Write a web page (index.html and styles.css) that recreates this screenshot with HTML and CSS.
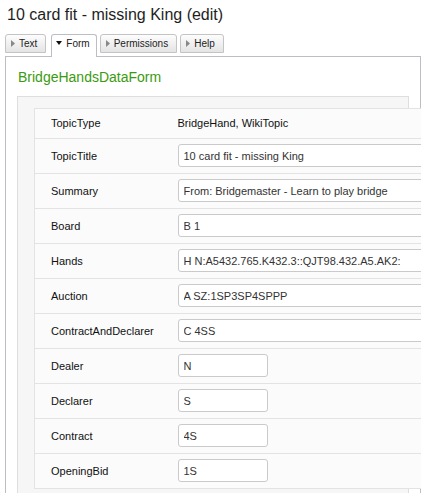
FILE: index.html
```html
<!DOCTYPE html>
<html>
<head>
<meta charset="utf-8">
<link rel="stylesheet" href="styles.css">
</head>
<body>
<h1 class="title">10 card fit - missing King (edit)</h1>
<ul class="tabs">
  <li class="tab"><svg class="arrow" width="4" height="7" viewBox="0 0 4 7"><path d="M0 0L4 3.5L0 7Z"/></svg>Text</li>
  <li class="tab active"><svg class="arrow" width="6" height="4" viewBox="0 0 6 4"><path d="M0 0L6 0L3 4Z"/></svg>Form</li>
  <li class="tab"><svg class="arrow" width="4" height="7" viewBox="0 0 4 7"><path d="M0 0L4 3.5L0 7Z"/></svg>Permissions</li>
  <li class="tab"><svg class="arrow" width="4" height="7" viewBox="0 0 4 7"><path d="M0 0L4 3.5L0 7Z"/></svg>Help</li>
</ul>
<div class="panel">
  <h2 class="form-title">BridgeHandsDataForm</h2>
  <div class="form-box">
    <table class="form-table">
      <colgroup><col class="label-col"><col class="value-col"></colgroup>
      <tr><th>TopicType</th><td>BridgeHand, WikiTopic</td></tr>
      <tr><th>TopicTitle</th><td><input class="field wide" type="text" value="10 card fit - missing King"></td></tr>
      <tr><th>Summary</th><td><input class="field wide" type="text" value="From: Bridgemaster - Learn to play bridge"></td></tr>
      <tr><th>Board</th><td><input class="field wide" type="text" value="B 1"></td></tr>
      <tr><th>Hands</th><td><input class="field wide" type="text" value="H N:A5432.765.K432.3::QJT98.432.A5.AK2:"></td></tr>
      <tr><th>Auction</th><td><input class="field wide" type="text" value="A SZ:1SP3SP4SPPP"></td></tr>
      <tr><th>ContractAndDeclarer</th><td><input class="field wide" type="text" value="C 4SS"></td></tr>
      <tr><th>Dealer</th><td><input class="field short" type="text" value="N"></td></tr>
      <tr><th>Declarer</th><td><input class="field short" type="text" value="S"></td></tr>
      <tr><th>Contract</th><td><input class="field short" type="text" value="4S"></td></tr>
      <tr><th>OpeningBid</th><td><input class="field short" type="text" value="1S"></td></tr>
    </table>
  </div>
</div>
</body>
</html>
```

FILE: styles.css
```css
html, body {
  margin: 0;
  padding: 0;
  overflow: hidden;
}
body {
  font-family: "Liberation Sans", Arial, sans-serif;
  color: #222;
  background: #fff;
}
.title {
  margin: 0;
  padding: 5px 0 0 7px;
  font-size: 16px;
  line-height: 20px;
  font-weight: normal;
  color: #1e1e1e;
}
.tabs {
  list-style: none;
  margin: 9px 0 0 0;
  padding: 0 0 0 5px;
  height: 22px;
  display: flex;
  align-items: flex-start;
  gap: 3px;
}
.tab {
  box-sizing: border-box;
  height: 19px;
  border: 1px solid #c4c4c4;
  border-radius: 3px 3px 0 0;
  background: linear-gradient(#fdfdfd, #e4e4e4);
  font-size: 10px;
  line-height: 17px;
  padding: 0 8px 0 5px;
  color: #222;
  display: flex;
  align-items: center;
}
.tab .arrow {
  fill: #888;
  margin-right: 4px;
  flex: none;
}
.tab.active {
  height: 23px;
  background: #fff;
  border-color: #bdbdc8;
  border-bottom: none;
  position: relative;
  z-index: 1;
  align-items: flex-start;
  padding-left: 4px;
  padding-right: 6px;
  margin-left: 2px;
}
.tab.active .arrow {
  fill: #111;
  margin-top: 6px;
}
.panel {
  margin-left: 5px;
  width: 416px;
  box-sizing: border-box;
  border: 1px solid #bdbdc8;
  padding: 0 11px;
  height: 480px;
}
.form-title {
  margin: 0;
  padding: 11px 0 0 1px;
  height: 28px;
  font-size: 14px;
  line-height: 18px;
  font-weight: normal;
  color: #3b9a10;
}
.form-box {
  border: 1px solid #dedede;
  background: #f6f6f6;
  padding: 11px 0 0 16px;
  height: 420px;
}
.form-table {
  table-layout: fixed;
  border-collapse: collapse;
  background: #fbfbfb;
  border: 1px solid #e3e3e3;
  width: 460px;
}
.label-col {
  width: 135px;
}
.value-col {
  width: 325px;
}
.form-table tr {
  border-bottom: 1px solid #e3e3e3;
}
.form-table th,
.form-table td {
  font-size: 11px;
  line-height: 18px;
  vertical-align: middle;
  text-align: left;
  padding: 5px 8px 6px 8px;
  color: #111;
  font-weight: normal;
  white-space: nowrap;
}
.form-table th {
  padding-left: 16px;
}
.field {
  box-sizing: border-box;
  height: 23px;
  border: 1px solid #cacaca;
  border-radius: 3px;
  background: #fff;
  font-family: "Liberation Sans", Arial, sans-serif;
  font-size: 11px;
  color: #333;
  padding: 0 5px;
  margin: 0;
  display: block;
}
.field.wide {
  width: 300px;
}
.field.short {
  width: 90px;
}
```
